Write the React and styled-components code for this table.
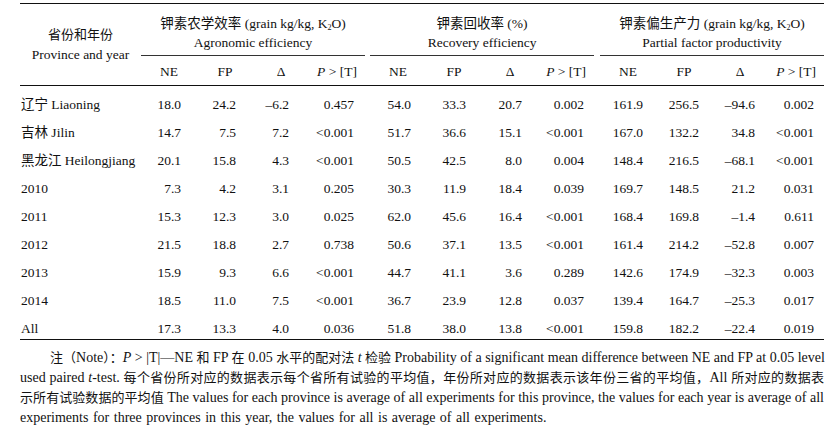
import React from "react";
import styled, { createGlobalStyle } from "styled-components";

const GlobalStyle = createGlobalStyle`
  body {
    margin: 0;
    background: #ffffff;
    font-family: "Liberation Serif", "Noto Sans CJK SC", serif;
    color: #111;
  }
`;

const groups = [
  { zh: "钾素农学效率 (grain kg/kg, K", sub: true, en: "Agronomic efficiency" },
  { zh: "钾素回收率 (%)", sub: false, en: "Recovery efficiency" },
  { zh: "钾素偏生产力 (grain kg/kg, K", sub: true, en: "Partial factor productivity" },
];

// right padding for each data column, so the numbers sit where the print has them
const padRight = [16, 17, 20, 11, 15, 16, 16, 10, 13, 13, 13, 10];

const rows = [
  ["辽宁 Liaoning", "18.0", "24.2", "–6.2", "0.457", "54.0", "33.3", "20.7", "0.002", "161.9", "256.5", "–94.6", "0.002"],
  ["吉林 Jilin", "14.7", "7.5", "7.2", "<0.001", "51.7", "36.6", "15.1", "<0.001", "167.0", "132.2", "34.8", "<0.001"],
  ["黑龙江 Heilongjiang", "20.1", "15.8", "4.3", "<0.001", "50.5", "42.5", "8.0", "0.004", "148.4", "216.5", "–68.1", "<0.001"],
  ["2010", "7.3", "4.2", "3.1", "0.205", "30.3", "11.9", "18.4", "0.039", "169.7", "148.5", "21.2", "0.031"],
  ["2011", "15.3", "12.3", "3.0", "0.025", "62.0", "45.6", "16.4", "<0.001", "168.4", "169.8", "–1.4", "0.611"],
  ["2012", "21.5", "18.8", "2.7", "0.738", "50.6", "37.1", "13.5", "<0.001", "161.4", "214.2", "–52.8", "0.007"],
  ["2013", "15.9", "9.3", "6.6", "<0.001", "44.7", "41.1", "3.6", "0.289", "142.6", "174.9", "–32.3", "0.003"],
  ["2014", "18.5", "11.0", "7.5", "<0.001", "36.7", "23.9", "12.8", "0.037", "139.4", "164.7", "–25.3", "0.017"],
  ["All", "17.3", "13.3", "4.0", "0.036", "51.8", "38.0", "13.8", "<0.001", "159.8", "182.2", "–22.4", "0.019"],
];

const Page = styled.div`
  width: 804px;
  padding: 3px 0 0 20px;
`;

const Table = styled.table`
  width: 804px;
  border-collapse: collapse;
  table-layout: fixed;
  font-size: 13.5px;
  border-top: 1px solid #111;
  border-bottom: 1px solid #111;
`;

const HeadRow = styled.tr`
  border-bottom: ${(p) => (p.$ruled ? "1px solid #111" : "none")};
`;

const StubHead = styled.th`
  font-weight: normal;
  text-align: center;
  vertical-align: middle;
  line-height: 20px;
  padding: 0;
`;

const GroupHead = styled.th`
  font-weight: normal;
  text-align: center;
  line-height: 19px;
  padding: 10px 0 3px;
  border-bottom: 1px solid #333;
  white-space: nowrap;
`;

const ColHead = styled.th`
  font-weight: normal;
  text-align: center;
  line-height: 26px;
  padding: 3px 0 0;
`;

const Spacer = styled.td`
  padding: 0;
`;

const Sub = styled.sub`
  font-size: 8px;
  vertical-align: -2px;
  line-height: 0;
`;

const Zh = styled.span`
  font-size: 13px;
`;

const Row = styled.tr`
  & > td {
    line-height: ${(p) => (p.$last ? "20px" : "28px")};
    padding-top: ${(p) => (p.$first ? "5px" : p.$last ? "4px" : "0")};
    padding-bottom: 0;
  }
`;

const Stub = styled.td`
  padding-left: 1px;
  text-align: left;
  white-space: nowrap;
`;

const Num = styled.td`
  text-align: right;
  padding-right: ${(p) => p.$pr}px;
  white-space: nowrap;
`;

const Note = styled.div`
  margin-top: 8px;
  font-size: 14px;
  line-height: 20px;
`;

const NoteLine = styled.div`
  text-align: justify;
  text-align-last: ${(p) => (p.$last ? "left" : "justify")};
  word-spacing: ${(p) => (p.$last ? "1px" : "0")};
  padding-left: ${(p) => (p.$indent ? "30px" : "0")};
  white-space: nowrap;
`;

const PHead = () => (
  <>
    <i>P</i> &gt; [T]
  </>
);

const App = () => {
  return (
    <Page>
      <GlobalStyle />
      <Table>
        <colgroup>
          <col style={{ width: 121 }} />
          {[0, 1, 2].map((g) => (
            <React.Fragment key={g}>
              <col style={{ width: 56 }} />
              <col style={{ width: 56 }} />
              <col style={{ width: 56 }} />
              <col style={{ width: 56 }} />
              {g < 2 && <col style={{ width: g === 0 ? 5 : 6 }} />}
            </React.Fragment>
          ))}
        </colgroup>
        <thead>
          <HeadRow>
            <StubHead rowSpan={2}>
              <Zh>省份和年份</Zh>
              <br />
              Province and year
            </StubHead>
            {groups.map((g, i) => (
              <React.Fragment key={i}>
                <GroupHead colSpan={4}>
                  {g.zh}
                  {g.sub && (
                    <>
                      <Sub>2</Sub>O)
                    </>
                  )}
                  <br />
                  {g.en}
                </GroupHead>
                {i < 2 && <Spacer />}
              </React.Fragment>
            ))}
          </HeadRow>
          <HeadRow $ruled>
            {[0, 1, 2].map((g) => (
              <React.Fragment key={g}>
                <ColHead>NE</ColHead>
                <ColHead>FP</ColHead>
                <ColHead>Δ</ColHead>
                <ColHead>
                  <PHead />
                </ColHead>
                {g < 2 && <Spacer />}
              </React.Fragment>
            ))}
          </HeadRow>
        </thead>
        <tbody>
          {rows.map((r, i) => (
            <Row key={r[0]} $first={i === 0} $last={i === rows.length - 1}>
              <Stub>{r[0]}</Stub>
              {r.slice(1).map((v, j) => (
                <React.Fragment key={j}>
                  <Num $pr={padRight[j]}>{v}</Num>
                  {(j === 3 || j === 7) && <Spacer />}
                </React.Fragment>
              ))}
            </Row>
          ))}
        </tbody>
      </Table>
      <Note>
        <NoteLine $indent>
          <Zh>注（</Zh>Note<Zh>）：</Zh>
          <i>P</i> &gt; |T|—NE <Zh>和</Zh> FP <Zh>在</Zh> 0.05 <Zh>水平的配对法</Zh> <i>t</i>{" "}
          <Zh>检验</Zh> Probability of a significant mean difference between NE and FP at 0.05 level
        </NoteLine>
        <NoteLine>
          used paired <i>t</i>-test.{" "}
          <Zh>每个省份所对应的数据表示每个省所有试验的平均值，年份所对应的数据表示该年份三省的平均值，</Zh>All{" "}
          <Zh>所对应的数据表</Zh>
        </NoteLine>
        <NoteLine>
          <Zh>示所有试验数据的平均值</Zh> The values for each province is average of all experiments for this
          province, the values for each year is average of all
        </NoteLine>
        <NoteLine $last>
          experiments for three provinces in this year, the values for all is average of all experiments.
        </NoteLine>
      </Note>
    </Page>
  );
};

export default App;
